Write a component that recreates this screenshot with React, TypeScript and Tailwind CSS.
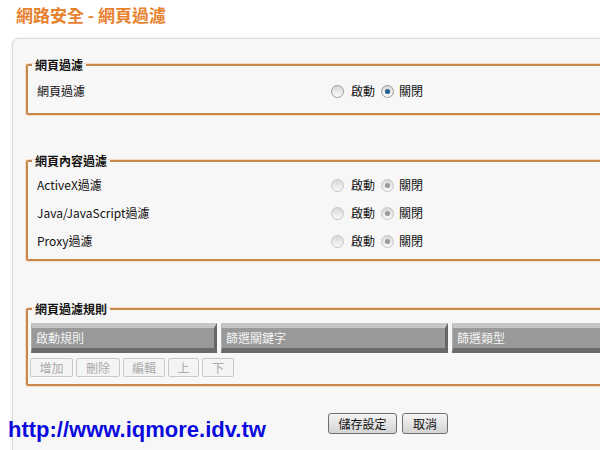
import React from 'react';

const font = "font-['Noto_Sans_CJK_TC','Liberation_Sans',sans-serif]";

const Radio: React.FC<{ checked?: boolean; dim?: boolean }> = ({ checked, dim }) => (
  <span
    className={`inline-block w-[13px] h-[13px] rounded-full border ${dim ? 'border-[#c4c4c4]' : 'border-[#9a9a9a]'} bg-gradient-to-b from-[#d8d8d8] to-[#fafafa] relative`}
  >
    {checked && (
      <span
        className={`absolute left-[3px] top-[3px] w-[5px] h-[5px] rounded-full ${dim ? 'bg-[#9a9a9a]' : 'bg-[#1d5d8a]'}`}
      />
    )}
  </span>
);

const Row: React.FC<{ label: string; dim?: boolean }> = ({ label, dim }) => (
  <div className="flex items-center h-[28px]">
    <span className="w-[303px] pl-[9px] text-[12px] text-[#111]">{label}</span>
    <Radio dim={dim} />
    <span className="ml-[7px] text-[12px] text-[#111]">啟動</span>
    <span className="ml-[6px] flex"><Radio checked dim={dim} /></span>
    <span className="ml-[5px] text-[12px] text-[#111]">關閉</span>
  </div>
);

const Box: React.FC<{ title: string; className?: string; children: React.ReactNode }> = ({ title, className = '', children }) => (
  <fieldset className={`border-2 border-[#c8874f] rounded-[2px] ml-[13px] mr-[-40px] shadow-[0_0_0_1px_#f6dcc4] ${className}`}>
    <legend className="ml-[4px] px-[3px] text-[12px] font-bold text-[#111] leading-[14px]">{title}</legend>
    {children}
  </fieldset>
);

const HeadCell: React.FC<{ w: string; label: string }> = ({ w, label }) => (
  <div
    className={`${w} h-[30px] bg-[#999] border-t-[5px] border-t-[#c6c6c6] border-b-[5px] border-b-[#6a6a6a] border-r-[3px] border-r-[#666] border-l border-l-[#b0b0b0] flex items-center pl-[4px] text-[12px] text-[#f4f4f4] shrink-0`}
  >
    {label}
  </div>
);

const SmallBtn: React.FC<{ w: string; label: string }> = ({ w, label }) => (
  <button className={`${w} h-[19px] border border-[#c9c9c9] rounded-[2px] bg-[#f4f4f4] text-[12px] text-[#aaa] leading-none`}>
    {label}
  </button>
);

export default function App() {
  return (
    <div className={`w-[600px] h-[450px] overflow-hidden bg-white relative ${font}`}>
      <h1 className="pl-[16px] pt-[2px] h-[38px] text-[17px] font-bold text-[#e8812d]">
        網路安全 - 網頁過濾
      </h1>
      <div className="ml-[12px] w-[640px] h-[440px] bg-[#f7f7f7] border border-[#dcdcdc] rounded-tl-[7px] shadow-[0_0_3px_rgba(0,0,0,0.12)] pt-[19px]">
        <Box title="網頁過濾" className="pb-[8px]">
          <div className="pt-[5px]">
            <Row label="網頁過濾" />
          </div>
        </Box>

        <Box title="網頁內容過濾" className="mt-[39px] pb-[4px]">
          <div className="pt-[3px]">
            <Row label="ActiveX過濾" dim />
            <Row label="Java/JavaScript過濾" dim />
            <Row label="Proxy過濾" dim />
          </div>
        </Box>

        <Box title="網頁過濾規則" className="mt-[41px] pb-[7px]">
          <div className="pl-[3px] pt-[7px] flex gap-[4px]">
            <HeadCell w="w-[186px]" label="啟動規則" />
            <HeadCell w="w-[227px]" label="篩選關鍵字" />
            <HeadCell w="w-[200px]" label="篩選類型" />
          </div>
          <div className="pl-[2px] pt-[5px] flex gap-[3px]">
            <SmallBtn w="w-[43px]" label="增加" />
            <SmallBtn w="w-[44px]" label="刪除" />
            <SmallBtn w="w-[42px]" label="編輯" />
            <SmallBtn w="w-[31px]" label="上" />
            <SmallBtn w="w-[32px]" label="下" />
          </div>
        </Box>

        <div className="flex gap-[5px] pl-[315px] pt-[27px]">
          <button className="w-[69px] h-[21px] border border-[#707070] rounded-[3px] bg-gradient-to-b from-[#f4f4f4] to-[#d4d4d4] text-[12px] text-[#111]">
            儲存設定
          </button>
          <button className="w-[46px] h-[21px] border border-[#707070] rounded-[3px] bg-gradient-to-b from-[#f4f4f4] to-[#d4d4d4] text-[12px] text-[#111]">
            取消
          </button>
        </div>
      </div>
      <div className="absolute left-[8px] top-[413px] font-['Liberation_Sans',sans-serif] font-bold text-[22px] text-[#0a0adc] [text-shadow:0_0_2px_#fff,0_0_2px_#fff]">
        http://www.iqmore.idv.tw
      </div>
    </div>
  );
}
